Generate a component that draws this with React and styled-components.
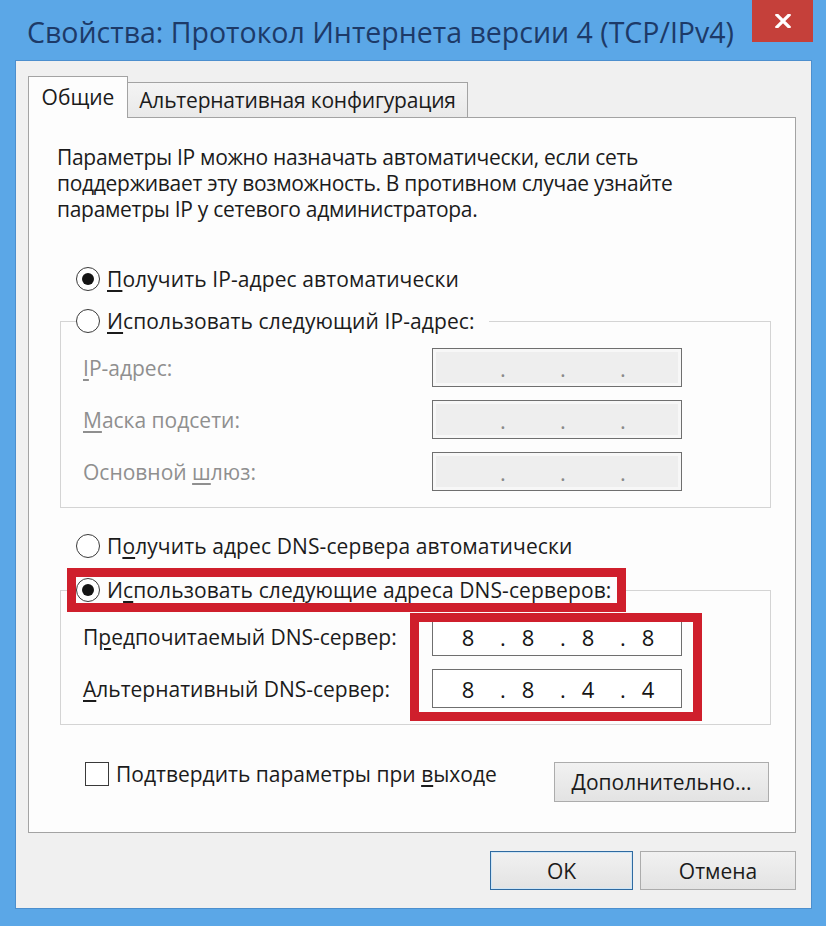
import React from 'react';
import styled, { createGlobalStyle } from 'styled-components';

const Global = createGlobalStyle`
  html, body { margin: 0; padding: 0; background: #5ba7e7; }
  body { font-family: "Open Sans", "Noto Sans", sans-serif; color: #1b1b1b; }
  *, *::before, *::after { box-sizing: border-box; }
`;

const Window = styled.div`
  width: 826px;
  height: 926px;
  background: #5ba7e7;
  display: flex;
  flex-direction: column;
`;

const TitleBar = styled.div`
  height: 60px;
  flex: none;
  display: flex;
  align-items: flex-start;
  justify-content: space-between;
  padding-left: 27px;
`;

const Title = styled.h1`
  margin: 0;
  padding-top: 2px;
  font-size: 28.5px;
  line-height: 60px;
  font-weight: 400;
  color: #1d3a68;
  white-space: nowrap;
`;

const CloseButton = styled.div`
  width: 61px;
  height: 42px;
  margin-right: 13px;
  background: #c5403a;
  display: flex;
  align-items: center;
  justify-content: center;
`;

const Body = styled.div`
  flex: 1;
  display: flex;
  padding: 0 14px 18px 15px;
`;

const Client = styled.div`
  flex: 1;
  display: flex;
  flex-direction: column;
  background: #f0f0f0;
  border: 1px solid #4c8fce;
  padding: 15px 15px 0 12px;
`;

const TabStrip = styled.div`
  height: 41px;
  display: flex;
  align-items: flex-start;
  position: relative;
  z-index: 1;
`;

const Tab = styled.div`
  display: flex;
  align-items: center;
  justify-content: center;
  font-size: 21px;
  white-space: nowrap;
  border: 1px solid #a3a3a3;
  border-bottom: none;
  ${(p) =>
    p.$active
      ? `
    width: 100px;
    height: 42px;
    padding-bottom: 2px;
    background: #fdfdfd;
  `
      : `
    width: 340px;
    height: 35px;
    margin-top: 6px;
    border-left: none;
    letter-spacing: -0.2px;
    background: linear-gradient(#f4f4f4, #e9e9e9);
  `}
`;

const Panel = styled.div`
  height: 716px;
  flex: none;
  background: #fdfdfd;
  border: 1px solid #a3a3a3;
  padding: 26px 24px 0 28px;
  display: flex;
  flex-direction: column;
`;

const Paragraph = styled.p`
  margin: 0;
  font-size: 21px;
  line-height: 26px;
  letter-spacing: -0.3px;
`;

const Key = styled.span`
  text-decoration: underline;
  text-underline-offset: 3px;
  text-decoration-thickness: 1.5px;
`;

const RadioRow = styled.label`
  display: flex;
  align-items: center;
  gap: 7px;
  height: 26px;
  font-size: 21px;
  letter-spacing: 0.1px;
  white-space: nowrap;
  margin: ${(p) => p.$margin || '0'};
`;

const RadioCircle = styled.span`
  width: 24px;
  height: 24px;
  flex: none;
  border-radius: 50%;
  border: 1.5px solid #3a3a3a;
  background: #fff;
  display: flex;
  align-items: center;
  justify-content: center;
  &::after {
    content: '';
    width: 12px;
    height: 12px;
    border-radius: 50%;
    background: ${(p) => (p.$checked ? '#141414' : 'transparent')};
  }
`;

const Group = styled.fieldset`
  margin: ${(p) => p.$margin || '0'};
  padding: 0;
  min-width: 0;
  border: 1px solid #d4d4d4;
`;

const Legend = styled.legend`
  margin-left: 15px;
  padding: 0 ${(p) => (p.$highlight ? 6 : 14)}px 0 0;
  ${(p) => (p.$highlight ? 'outline: 9px solid #cf1f2c; outline-offset: 0;' : '')}
`;

const FieldGrid = styled.div`
  display: grid;
  grid-template-columns: 1fr 250px;
  row-gap: 13px;
  grid-auto-rows: 39px;
  align-items: center;
  padding: 14px 88px 16px 22px;
`;

const FieldLabel = styled.span`
  grid-column: 1;
  grid-row: ${(p) => p.$row};
  font-size: 21px;
  white-space: nowrap;
  color: ${(p) => (p.$disabled ? '#8f8f8f' : '#1b1b1b')};
`;

const IpBox = styled.div`
  grid-column: 2;
  grid-row: ${(p) => p.$row};
  height: 39px;
  border: 1px solid #6f6f6f;
  background: ${(p) => (p.$disabled ? '#eeeeee' : '#ffffff')};
  box-shadow: ${(p) => (p.$disabled ? 'inset 0 0 0 3px #f7f7f7' : 'none')};
  display: grid;
  grid-template-columns: 52px 8px 52px 8px 52px 8px 52px;
  align-items: center;
  padding-left: 9px;
  font-size: 22px;
  color: ${(p) => (p.$disabled ? '#8a8a8a' : '#161616')};
`;

const Octet = styled.span`
  text-align: center;
`;

const Dot = styled.span`
  text-align: center;
  padding-left: 6px;
`;

const FieldHighlight = styled.div`
  grid-column: 2;
  grid-row: 1 / span 2;
  align-self: stretch;
  margin: -4px -20px -13px -22px;
  border: 9px solid #cf1f2c;
  pointer-events: none;
`;

const BottomRow = styled.div`
  display: flex;
  align-items: flex-start;
  justify-content: space-between;
  margin: 37px 2px 0 28px;
`;

const CheckLabel = styled.label`
  display: flex;
  align-items: center;
  gap: 7px;
  height: 24px;
  font-size: 21px;
  white-space: nowrap;
`;

const CheckBox = styled.span`
  width: 24px;
  height: 24px;
  border: 1.5px solid #3a3a3a;
  background: #fff;
`;

const Button = styled.button`
  font-family: inherit;
  font-size: 21px;
  color: #1b1b1b;
  width: ${(p) => p.$w}px;
  height: ${(p) => p.$h || 39}px;
  padding: 0;
  background: linear-gradient(#f1f1f1, #e3e3e3);
  border: 1px solid ${(p) => (p.$default ? '#2f6aa0' : '#acacac')};
  box-shadow: ${(p) => (p.$default ? 'inset 0 0 0 1px #cfe6f7' : 'none')};
  border-radius: 0;
`;

const Footer = styled.div`
  display: flex;
  justify-content: flex-end;
  gap: 7px;
  padding: 18px 0;
`;

function Ip({ values, disabled, row }) {
  return (
    <IpBox $disabled={disabled} $row={row}>
      <Octet>{values[0]}</Octet>
      <Dot>.</Dot>
      <Octet>{values[1]}</Octet>
      <Dot>.</Dot>
      <Octet>{values[2]}</Octet>
      <Dot>.</Dot>
      <Octet>{values[3]}</Octet>
    </IpBox>
  );
}

function Radio({ checked, children, margin }) {
  return (
    <RadioRow $margin={margin}>
      <RadioCircle $checked={checked} />
      <span>{children}</span>
    </RadioRow>
  );
}

export default function App() {
  const empty = ['', '', '', ''];
  return (
    <>
      <Global />
      <Window>
        <TitleBar>
          <Title>Свойства: Протокол Интернета версии 4 (TCP/IPv4)</Title>
          <CloseButton>
            <svg width="16" height="14" viewBox="0 0 16 14">
              <path d="M2 1 L14 13 M14 1 L2 13" stroke="#fff" strokeWidth="3.2" strokeLinecap="square" />
            </svg>
          </CloseButton>
        </TitleBar>
        <Body>
          <Client>
            <TabStrip>
              <Tab $active>Общие</Tab>
              <Tab>Альтернативная конфигурация</Tab>
            </TabStrip>
            <Panel>
              <Paragraph>
                Параметры IP можно назначать автоматически, если сеть
                <br />
                поддерживает эту возможность. В противном случае узнайте
                <br />
                параметры IP у сетевого администратора.
              </Paragraph>

              <Radio checked margin="44px 0 0 19px">
                <Key>П</Key>олучить IP-адрес автоматически
              </Radio>

              <Group $margin="16px 0 0 3px">
                <Legend>
                  <Radio>
                    <Key>И</Key>спользовать следующий IP-адрес:
                  </Radio>
                </Legend>
                <FieldGrid>
                  <FieldLabel $disabled $row={1}>
                    <Key>I</Key>P-адрес:
                  </FieldLabel>
                  <Ip values={empty} disabled row={1} />
                  <FieldLabel $disabled $row={2}>
                    <Key>М</Key>аска подсети:
                  </FieldLabel>
                  <Ip values={empty} disabled row={2} />
                  <FieldLabel $disabled $row={3}>
                    Основной <Key>ш</Key>люз:
                  </FieldLabel>
                  <Ip values={empty} disabled row={3} />
                </FieldGrid>
              </Group>

              <Radio margin="25px 0 0 19px">
                П<Key>о</Key>лучить адрес DNS-сервера автоматически
              </Radio>

              <Group $margin="18px 0 0 3px">
                <Legend $highlight>
                  <Radio checked>
                    И<Key>с</Key>пользовать следующие адреса DNS-серверов:
                  </Radio>
                </Legend>
                <FieldGrid>
                  <FieldLabel $row={1}>
                    П<Key>р</Key>едпочитаемый DNS-сервер:
                  </FieldLabel>
                  <Ip values={['8', '8', '8', '8']} row={1} />
                  <FieldLabel $row={2}>
                    <Key>А</Key>льтернативный DNS-сервер:
                  </FieldLabel>
                  <Ip values={['8', '8', '4', '4']} row={2} />
                  <FieldHighlight />
                </FieldGrid>
              </Group>

              <BottomRow>
                <CheckLabel>
                  <CheckBox />
                  <span>
                    Подтвердить параметры при <Key>в</Key>ыходе
                  </span>
                </CheckLabel>
                <Button $w={215} $h={40}>
                  <Key>Д</Key>ополнительно...
                </Button>
              </BottomRow>
            </Panel>
            <Footer>
              <Button $w={143} $default>
                OK
              </Button>
              <Button $w={156}>Отмена</Button>
            </Footer>
          </Client>
        </Body>
      </Window>
    </>
  );
}
